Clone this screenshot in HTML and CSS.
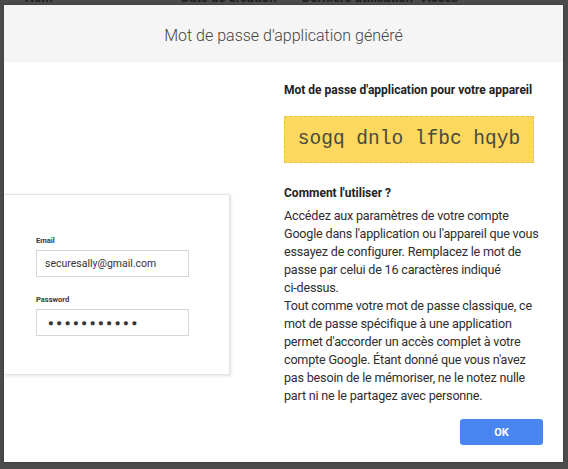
FILE: index.html
```html
<!DOCTYPE html>
<html lang="fr">
<head>
<meta charset="utf-8">
<link rel="stylesheet" href="styles.css">
</head>
<body>
<div class="table-head">
  <span class="c1">Nom</span>
  <span class="c2">Date de création</span>
  <span class="c3">Dernière utilisation</span>
  <span class="c4">Accès</span>
</div>
<div class="dialog">
  <div class="dialog-header">Mot de passe d'application généré</div>
  <div class="dialog-body">
    <div class="left">
      <div class="card">
        <div class="label">Email</div>
        <div class="input">securesally@gmail.com</div>
        <div class="label pw">Password</div>
        <div class="input dots">●●●●●●●●●●●</div>
      </div>
    </div>
    <div class="right">
      <h2 class="title">Mot de passe d'application pour votre appareil</h2>
      <div class="code">sogq dnlo lfbc hqyb</div>
      <h2 class="title how">Comment l'utiliser ?</h2>
      <p class="text">Accédez aux paramètres de votre compte<br>Google dans l'application ou l'appareil que vous<br>essayez de configurer. Remplacez le mot de<br>passe par celui de 16 caractères indiqué<br>ci-dessus.<br>Tout comme votre mot de passe classique, ce<br>mot de passe spécifique à une application<br>permet d'accorder un accès complet à votre<br>compte Google. Étant donné que vous n'avez<br>pas besoin de le mémoriser, ne le notez nulle<br>part ni ne le partagez avec personne.</p>
      <div class="actions"><button class="ok">OK</button></div>
    </div>
  </div>
</div>
</body>
</html>
```

FILE: styles.css
```css
html, body {
  margin: 0;
  padding: 0;
  width: 568px;
  height: 469px;
  overflow: hidden;
  background: #4b4b4b;
  font-family: Roboto, "Liberation Sans", Arial, sans-serif;
}
.table-head {
  display: flex;
  height: 8px;
  margin-top: -10px;
  color: #1e1e1e;
  font-size: 13px;
  font-weight: bold;
  line-height: 16px;
  white-space: nowrap;
}
.table-head span { flex-shrink: 0; }
.table-head .c1 { margin-left: 25px; width: 156px; }
.table-head .c2 { width: 121px; }
.table-head .c3 { width: 120px; }
.dialog {
  position: absolute;
  left: 4px;
  top: 5px;
  width: 559px;
  height: 457px;
  background: #fff;
  display: flex;
  flex-direction: column;
  box-shadow: 0 0 2px rgba(0,0,0,0.3);
}
.dialog-header {
  height: 57px;
  background: #f5f5f5;
  color: #444;
  font-size: 16px;
  font-weight: 300;
  display: flex;
  align-items: center;
  justify-content: center;
  padding-top: 3px;
  box-sizing: border-box;
}
.dialog-body {
  flex: 1;
  display: flex;
}
.left {
  width: 280px;
  padding-top: 132px;
}
.card {
  width: 226px;
  height: 181px;
  box-sizing: border-box;
  background: #fff;
  border: 1px solid #e4e4e4;
  border-left: none;
  box-shadow: 1px 1px 3px rgba(0,0,0,0.12);
  padding: 41px 0 0 32px;
}
.label {
  font-size: 7.5px;
  font-weight: bold;
  color: #3a3a3a;
  line-height: 10px;
  margin-bottom: 4px;
}
.label.pw { margin-top: 18px; }
.input {
  width: 153px;
  height: 27px;
  box-sizing: border-box;
  border: 1px solid #d6d6d6;
  font-size: 10.5px;
  color: #333;
  padding-left: 8px;
  display: flex;
  align-items: center;
}
.input.dots {
  font-size: 9.5px;
  letter-spacing: 2.6px;
  padding-left: 11px;
  color: #333;
}
.right {
  flex: 1;
  padding-top: 20px;
  padding-right: 6px;
  display: flex;
  flex-direction: column;
}
.title {
  margin: 0;
  font-size: 12px;
  font-weight: bold;
  color: #222;
  line-height: 16px;
}
.code {
  margin-top: 18px;
  width: 250px;
  height: 47px;
  box-sizing: border-box;
  background: #fdd85f;
  border: 1px dashed #e3c250;
  font-family: "Liberation Mono", "Courier New", monospace;
  font-size: 19.5px;
  color: #4a4a40;
  display: flex;
  align-items: center;
  justify-content: center;
  padding-bottom: 2px;
}
.how { margin-top: 22px; }
.text {
  margin: 6px 0 0;
  font-size: 12.6px;
  letter-spacing: -0.2px;
  line-height: 18px;
  color: #2e2e2e;
  white-space: nowrap;
}
.actions {
  display: flex;
  justify-content: flex-end;
  margin-top: 14px;
  padding-right: 14px;
}
.ok {
  width: 83px;
  height: 26px;
  border: none;
  border-radius: 3px;
  background: #4a86f0;
  color: #fff;
  font-family: Roboto, "Liberation Sans", Arial, sans-serif;
  font-size: 11px;
  font-weight: bold;
}
```
